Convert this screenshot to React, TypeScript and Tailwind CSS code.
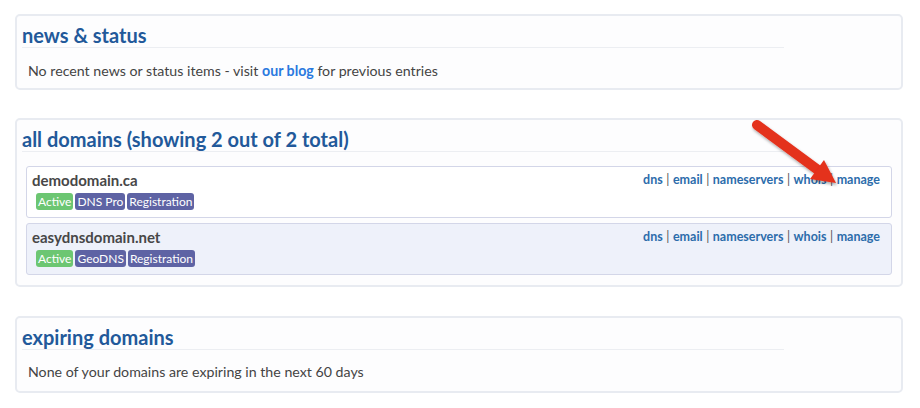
import React from 'react';

type Domain = {
  name: string;
  badges: { label: string; tone: 'green' | 'purple' }[];
  shaded: boolean;
};

const domains: Domain[] = [
  {
    name: 'demodomain.ca',
    badges: [
      { label: 'Active', tone: 'green' },
      { label: 'DNS Pro', tone: 'purple' },
      { label: 'Registration', tone: 'purple' },
    ],
    shaded: false,
  },
  {
    name: 'easydnsdomain.net',
    badges: [
      { label: 'Active', tone: 'green' },
      { label: 'GeoDNS', tone: 'purple' },
      { label: 'Registration', tone: 'purple' },
    ],
    shaded: true,
  },
];

const links = ['dns', 'email', 'nameservers', 'whois', 'manage'];

const Panel: React.FC<{ title: string; children: React.ReactNode; className?: string }> = ({ title, children, className }) => (
  <section className={`rounded-[5px] border-2 border-[#e8ebf1] bg-[#fdfdfe] pl-[5px] pr-[9px] pt-[7px] ${className ?? ''}`}>
    <h2 className="w-[762px] border-b border-[#eceef2] text-[20px] font-bold leading-[24px] text-[#22599a]">{title}</h2>
    {children}
  </section>
);

// red annotation arrow pointing at "manage"
const Arrow = () => (
  <svg className="pointer-events-none absolute left-[748px] top-[116px]" width="100" height="80" viewBox="0 0 100 80">
    <defs>
      <filter id="sh" x="-20%" y="-20%" width="140%" height="140%">
        <feDropShadow dx="1" dy="2" stdDeviation="1.5" floodColor="#000" floodOpacity="0.35" />
      </filter>
    </defs>
    <g filter="url(#sh)">
      <line x1="9" y1="9" x2="70" y2="54" stroke="#e4301c" strokeWidth="10" strokeLinecap="round" />
      <polygon points="88,67 76,44 62,63" fill="#e4301c" />
    </g>
  </svg>
);

const App: React.FC = () => {
  return (
    <div className="relative min-h-[408px] bg-white pl-[15px] pr-[17px] pt-[14px] font-['Lato','Liberation_Sans',sans-serif] text-[#444]">
      <Panel title="news & status">
        <p className="mt-[13px] pb-[7px] pl-[6px] text-[14.2px] leading-[20px]">
          No recent news or status items - visit{' '}
          <a className="font-bold text-[#2a79df]">our blog</a> for previous entries
        </p>
      </Panel>

      <Panel title="all domains (showing 2 out of 2 total)" className="mt-[28px]">
        <div className="mt-[14px] flex flex-col gap-[5px] pb-[10px] pl-[4px]">
          {domains.map((d) => (
            <div
              key={d.name}
              className={`h-[52px] rounded-[3px] border border-[#d3d6e8] pl-[5px] pr-[11px] pt-[3px] ${d.shaded ? 'bg-[#eef1fa]' : 'bg-white'}`}
            >
              <div className="flex items-center justify-between">
                <span className="text-[15px] font-bold leading-[20px] text-[#474747]">{d.name}</span>
                <span className="text-[12.5px] font-bold leading-[20px] text-[#2c6cab]">
                  {links.map((l, i) => (
                    <React.Fragment key={l}>
                      {i > 0 && <span className="px-[3.5px] font-normal text-[#555]">|</span>}
                      <a>{l}</a>
                    </React.Fragment>
                  ))}
                </span>
              </div>
              <div className="mt-[3px] flex gap-[2px] pl-[4px]">
                {d.badges.map((b) => (
                  <span
                    key={b.label}
                    className={`rounded-[3px] px-[2px] text-[12px] leading-[17px] text-white ${b.tone === 'green' ? 'bg-[#6cc672]' : 'bg-[#5e63a4]'}`}
                  >
                    {b.label}
                  </span>
                ))}
              </div>
            </div>
          ))}
        </div>
      </Panel>

      <Panel title="expiring domains" className="mt-[29px]">
        <p className="mt-[12px] pb-[9px] pl-[6px] text-[14.2px] leading-[20px]">
          None of your domains are expiring in the next 60 days
        </p>
      </Panel>

      <Arrow />
    </div>
  );
};

export default App;
